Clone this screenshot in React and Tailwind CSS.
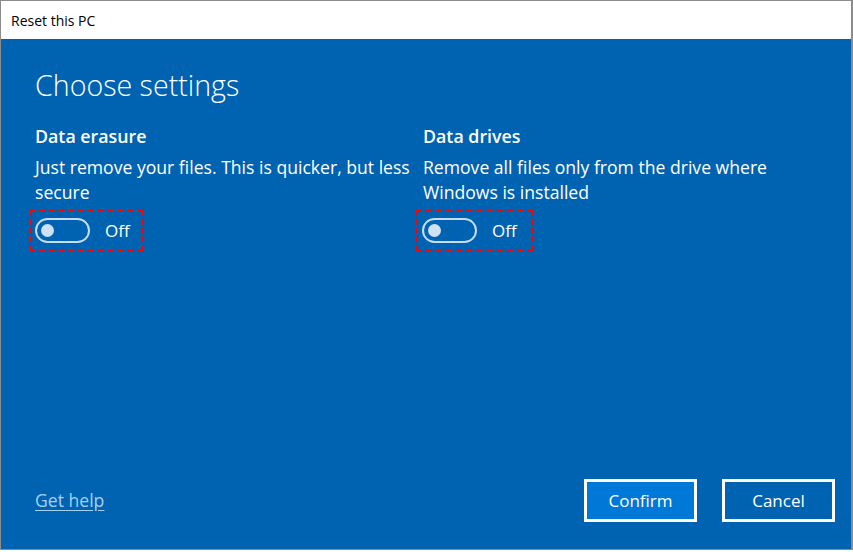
import React from "react";

const font = { fontFamily: '"Open Sans", "Noto Sans", sans-serif' };

function Toggle({ w }) {
  return (
    <div
      className={`flex h-[41px] items-center border-2 border-dashed border-[#ff0000] pl-[4px] ${w}`}
    >
      <div className="flex h-[25px] w-[55px] items-center rounded-full border-[2.5px] border-[#c8dbef] pl-[4px]">
        <div className="h-[13px] w-[13px] rounded-full bg-[#cfe1f3]" />
      </div>
      <span className="ml-[15px] text-[17px] leading-none text-white">Off</span>
    </div>
  );
}

function Column({ title, lines }) {
  return (
    <div className="flex flex-col">
      <div className="text-[17.8px] font-semibold leading-[22px] text-white">{title}</div>
      <div className="mt-[8px] text-[17.6px] leading-[25px] text-white">
        {lines.map((l, i) => (
          <div key={i} className="whitespace-nowrap">{l}</div>
        ))}
      </div>
    </div>
  );
}

export default function App() {
  return (
    <div className="h-[552px] w-[853px] bg-white" style={font}>
      <div className="flex h-[550px] w-[853px] flex-col border-l border-t border-r-2 border-b border-[#8c8c8c]">
        <div className="flex h-[38px] items-center bg-white pl-[10px] text-[14px] text-black">
          Reset this PC
        </div>
        <div className="flex flex-1 flex-col bg-[#0063b1] pl-[34px] pr-[16px]">
          <h1 className="mt-[26px] text-[28.6px] font-light leading-[40px] text-white">Choose settings</h1>
          <div className="mt-[20px] grid grid-cols-[388px_1fr]">
            <div className="flex flex-col">
              <Column title="Data erasure" lines={["Just remove your files. This is quicker, but less", "secure"]} />
              <div className="-ml-[6px] mt-[5px]">
                <Toggle w="w-[114px]" />
              </div>
            </div>
            <div className="flex flex-col">
              <Column title="Data drives" lines={["Remove all files only from the drive where", "Windows is installed"]} />
              <div className="-ml-[7px] mt-[5px]">
                <Toggle w="w-[117px]" />
              </div>
            </div>
          </div>
          <div className="mt-auto mb-[27px] flex items-center justify-between">
            <a className="text-[17.6px] text-[#a6d0f2] underline underline-offset-[3px]">Get help</a>
            <div className="flex gap-[25px]">
              <button className="h-[43px] w-[113px] border-[3px] border-white bg-[#0078d7] text-[17px] text-white">
                Confirm
              </button>
              <button className="h-[43px] w-[113px] border-[3px] border-white bg-[#0063b1] text-[17px] text-white">
                Cancel
              </button>
            </div>
          </div>
        </div>
      </div>
    </div>
  );
}
